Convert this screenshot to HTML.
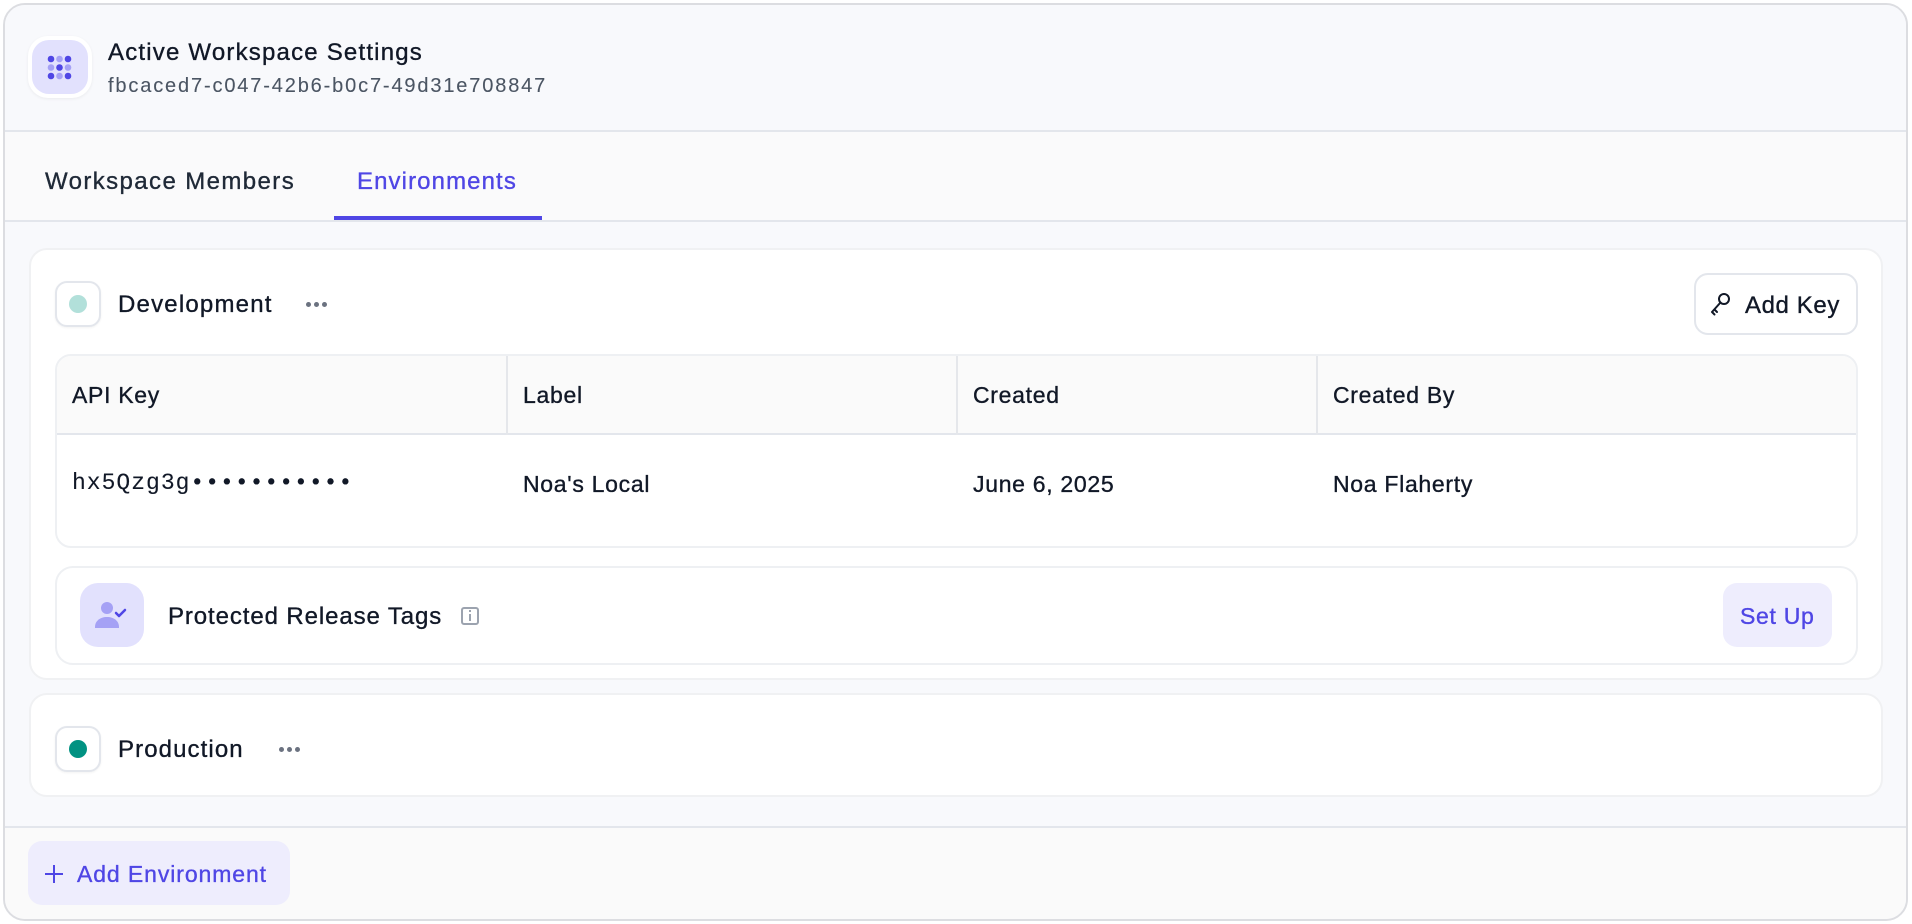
<!DOCTYPE html>
<html><head><meta charset="utf-8"><style>
*{box-sizing:border-box;margin:0;padding:0}
body{width:1912px;height:924px;background:#fff;font-family:"Liberation Sans",sans-serif;color:#111827;position:relative;overflow:hidden}
.abs{position:absolute}
.outer{left:3px;top:3px;width:1905px;height:918px;border:2px solid #dcdde1;border-radius:22px;overflow:hidden;background:#f8f9fc}
.t{position:absolute;white-space:nowrap;line-height:1;-webkit-text-stroke:0.35px currentColor}
.dots{position:absolute;display:flex;gap:3px}
.dots i{width:5px;height:5px;border-radius:50%;background:#6b7280;display:block}
</style></head><body>
<div class="abs outer">
  <div class="abs" style="left:0;top:0;width:100%;height:127px;background:#f8f9fc;border-bottom:2px solid #e3e6ec"></div>
  <div class="abs" style="left:0;top:127px;width:100%;height:90px;background:#fafafb;border-bottom:2px solid #e3e6ec"></div>
  <div class="abs" style="left:0;top:821px;width:100%;height:100px;background:#fafafa;border-top:2px solid #e3e6ec"></div>
</div>
<!-- header icon -->
<div class="abs" style="left:28px;top:36px;width:64px;height:62px;border-radius:20px;background:#fff;box-shadow:0 1px 3px rgba(0,0,0,.06)"></div>
<div class="abs" style="left:32px;top:40px;width:56px;height:54px;border-radius:17px;background:#e2e1fd"></div>
<svg class="abs" style="left:44px;top:52px" width="32" height="32" viewBox="0 0 32 32">
<g fill="#4f46e5"><circle cx="7" cy="7" r="3.3"/><circle cx="24" cy="7" r="3.3"/><circle cx="15.5" cy="15.5" r="3.3"/><circle cx="7" cy="24" r="3.3"/><circle cx="24" cy="24" r="3.3"/></g>
<g fill="#a5a1f5"><circle cx="15.5" cy="7" r="3.3"/><circle cx="7" cy="15.5" r="3.3"/><circle cx="24" cy="15.5" r="3.3"/><circle cx="15.5" cy="24" r="3.3"/></g>
</svg>
<div class="t" style="left:108px;top:41px;font-size:24px;letter-spacing:1.2px;color:#111827">Active Workspace Settings</div>
<div class="t" style="left:108px;top:76px;font-size:20px;letter-spacing:1.85px;color:#4b5563;-webkit-text-stroke:0.1px #4b5563">fbcaced7-c047-42b6-b0c7-49d31e708847</div>
<!-- tabs -->
<div class="t" style="left:45px;top:170px;font-size:24px;letter-spacing:1.4px;color:#1f2937">Workspace Members</div>
<div class="t" style="left:357px;top:170px;font-size:24px;letter-spacing:1.1px;color:#4f46e5">Environments</div>
<div class="abs" style="left:334px;top:216px;width:208px;height:4px;background:#4f46e5"></div>
<!-- dev card -->
<div class="abs" style="left:29px;top:248px;width:1854px;height:432px;background:#fff;border:2px solid #f0f1f3;border-radius:18px"></div>
<div class="abs" style="left:55px;top:281px;width:46px;height:46px;border:2px solid #e3e6ec;border-radius:12px;background:#fff;box-shadow:0 1px 2px rgba(0,0,0,.05)"></div>
<div class="abs" style="left:69px;top:295px;width:18px;height:18px;border-radius:50%;background:#b2e0da"></div>
<div class="t" style="left:118px;top:293px;font-size:24px;letter-spacing:1.2px">Development</div>
<div class="dots" style="left:306px;top:302px"><i></i><i></i><i></i></div>
<div class="abs" style="left:1694px;top:273px;width:164px;height:62px;border:2px solid #e3e6ec;border-radius:14px;background:#fff"></div>
<svg class="abs" style="left:1709px;top:291px" width="24" height="26" viewBox="0 0 24 26" fill="none" stroke="#111827" stroke-width="2" stroke-linecap="round"><circle cx="15" cy="8" r="5"/><path d="M11.5 11.5L3 21M3 21l2.5 2.5M5.5 18.5l2.5 2.5"/></svg>
<div class="t" style="left:1745px;top:294px;font-size:24px;letter-spacing:0.6px">Add Key</div>
<!-- table -->
<div class="abs" style="left:55px;top:354px;width:1803px;height:194px;border:2px solid #eef0f3;border-radius:16px;overflow:hidden;background:#fff">
  <div class="abs" style="left:0;top:0;width:100%;height:79px;background:#fafafa;border-bottom:2px solid #e3e6ec"></div>
  <div class="abs" style="left:449px;top:0;width:2px;height:79px;background:#e5e7eb"></div>
  <div class="abs" style="left:899px;top:0;width:2px;height:79px;background:#e5e7eb"></div>
  <div class="abs" style="left:1259px;top:0;width:2px;height:79px;background:#e5e7eb"></div>
</div>
<div class="t" style="left:72px;top:384px;font-size:23px;letter-spacing:0.7px">API Key</div>
<div class="t" style="left:523px;top:384px;font-size:23px;letter-spacing:0.7px">Label</div>
<div class="t" style="left:973px;top:384px;font-size:23px;letter-spacing:0.7px">Created</div>
<div class="t" style="left:1333px;top:384px;font-size:23px;letter-spacing:0.7px">Created By</div>
<div class="t" style="left:72px;top:472px;font-size:23px;letter-spacing:1px;font-family:'Liberation Mono',monospace;color:#111827;-webkit-text-stroke:0.1px #111827">hx5Qzg3g•••••••••••</div>
<div class="t" style="left:523px;top:473px;font-size:23px;letter-spacing:0.7px">Noa's Local</div>
<div class="t" style="left:973px;top:473px;font-size:23px;letter-spacing:0.7px">June 6, 2025</div>
<div class="t" style="left:1333px;top:473px;font-size:23px;letter-spacing:0.7px">Noa Flaherty</div>
<!-- protected -->
<div class="abs" style="left:55px;top:566px;width:1803px;height:99px;border:2px solid #eef0f3;border-radius:18px;background:#fff"></div>
<div class="abs" style="left:80px;top:583px;width:64px;height:64px;border-radius:18px;background:#e2e1fd"></div>
<svg class="abs" style="left:94px;top:599px" width="36" height="32" viewBox="0 0 36 32"><circle cx="13" cy="9" r="6" fill="#a5a1f5"/><path d="M1 28c0-6 5-10 12-10s12 4 12 10v1H1z" fill="#a5a1f5"/><path d="M22 14l3 3 6-6" stroke="#4f46e5" stroke-width="2.5" fill="none" stroke-linecap="round" stroke-linejoin="round"/></svg>
<div class="t" style="left:168px;top:605px;font-size:24px;letter-spacing:0.9px">Protected Release Tags</div>
<div class="abs" style="left:461px;top:607px;width:18px;height:18px;border:2px solid #9ca3af;border-radius:3px"></div>
<div class="abs" style="left:469px;top:610px;width:2px;height:2px;background:#9ca3af"></div>
<div class="abs" style="left:469px;top:614px;width:2px;height:7px;background:#9ca3af"></div>
<div class="abs" style="left:1723px;top:583px;width:109px;height:64px;border-radius:14px;background:#eeedfd"></div>
<div class="t" style="left:1740px;top:605px;font-size:23px;letter-spacing:0.7px;color:#4f46e5">Set Up</div>
<!-- production -->
<div class="abs" style="left:29px;top:693px;width:1854px;height:104px;background:#fff;border:2px solid #f0f1f3;border-radius:18px"></div>
<div class="abs" style="left:55px;top:726px;width:46px;height:46px;border:2px solid #e3e6ec;border-radius:12px;background:#fff;box-shadow:0 1px 2px rgba(0,0,0,.05)"></div>
<div class="abs" style="left:69px;top:740px;width:18px;height:18px;border-radius:50%;background:#019282"></div>
<div class="t" style="left:118px;top:738px;font-size:24px;letter-spacing:1.1px">Production</div>
<div class="dots" style="left:279px;top:747px"><i></i><i></i><i></i></div>
<!-- footer -->
<div class="abs" style="left:28px;top:841px;width:262px;height:64px;border-radius:14px;background:#eeedfd"></div>
<svg class="abs" style="left:44px;top:864px" width="20" height="20" viewBox="0 0 20 20"><path d="M10 1v18M1 10h18" stroke="#4f46e5" stroke-width="2"/></svg>
<div class="t" style="left:77px;top:863px;font-size:23px;letter-spacing:0.9px;color:#4f46e5">Add Environment</div>
</body></html>
